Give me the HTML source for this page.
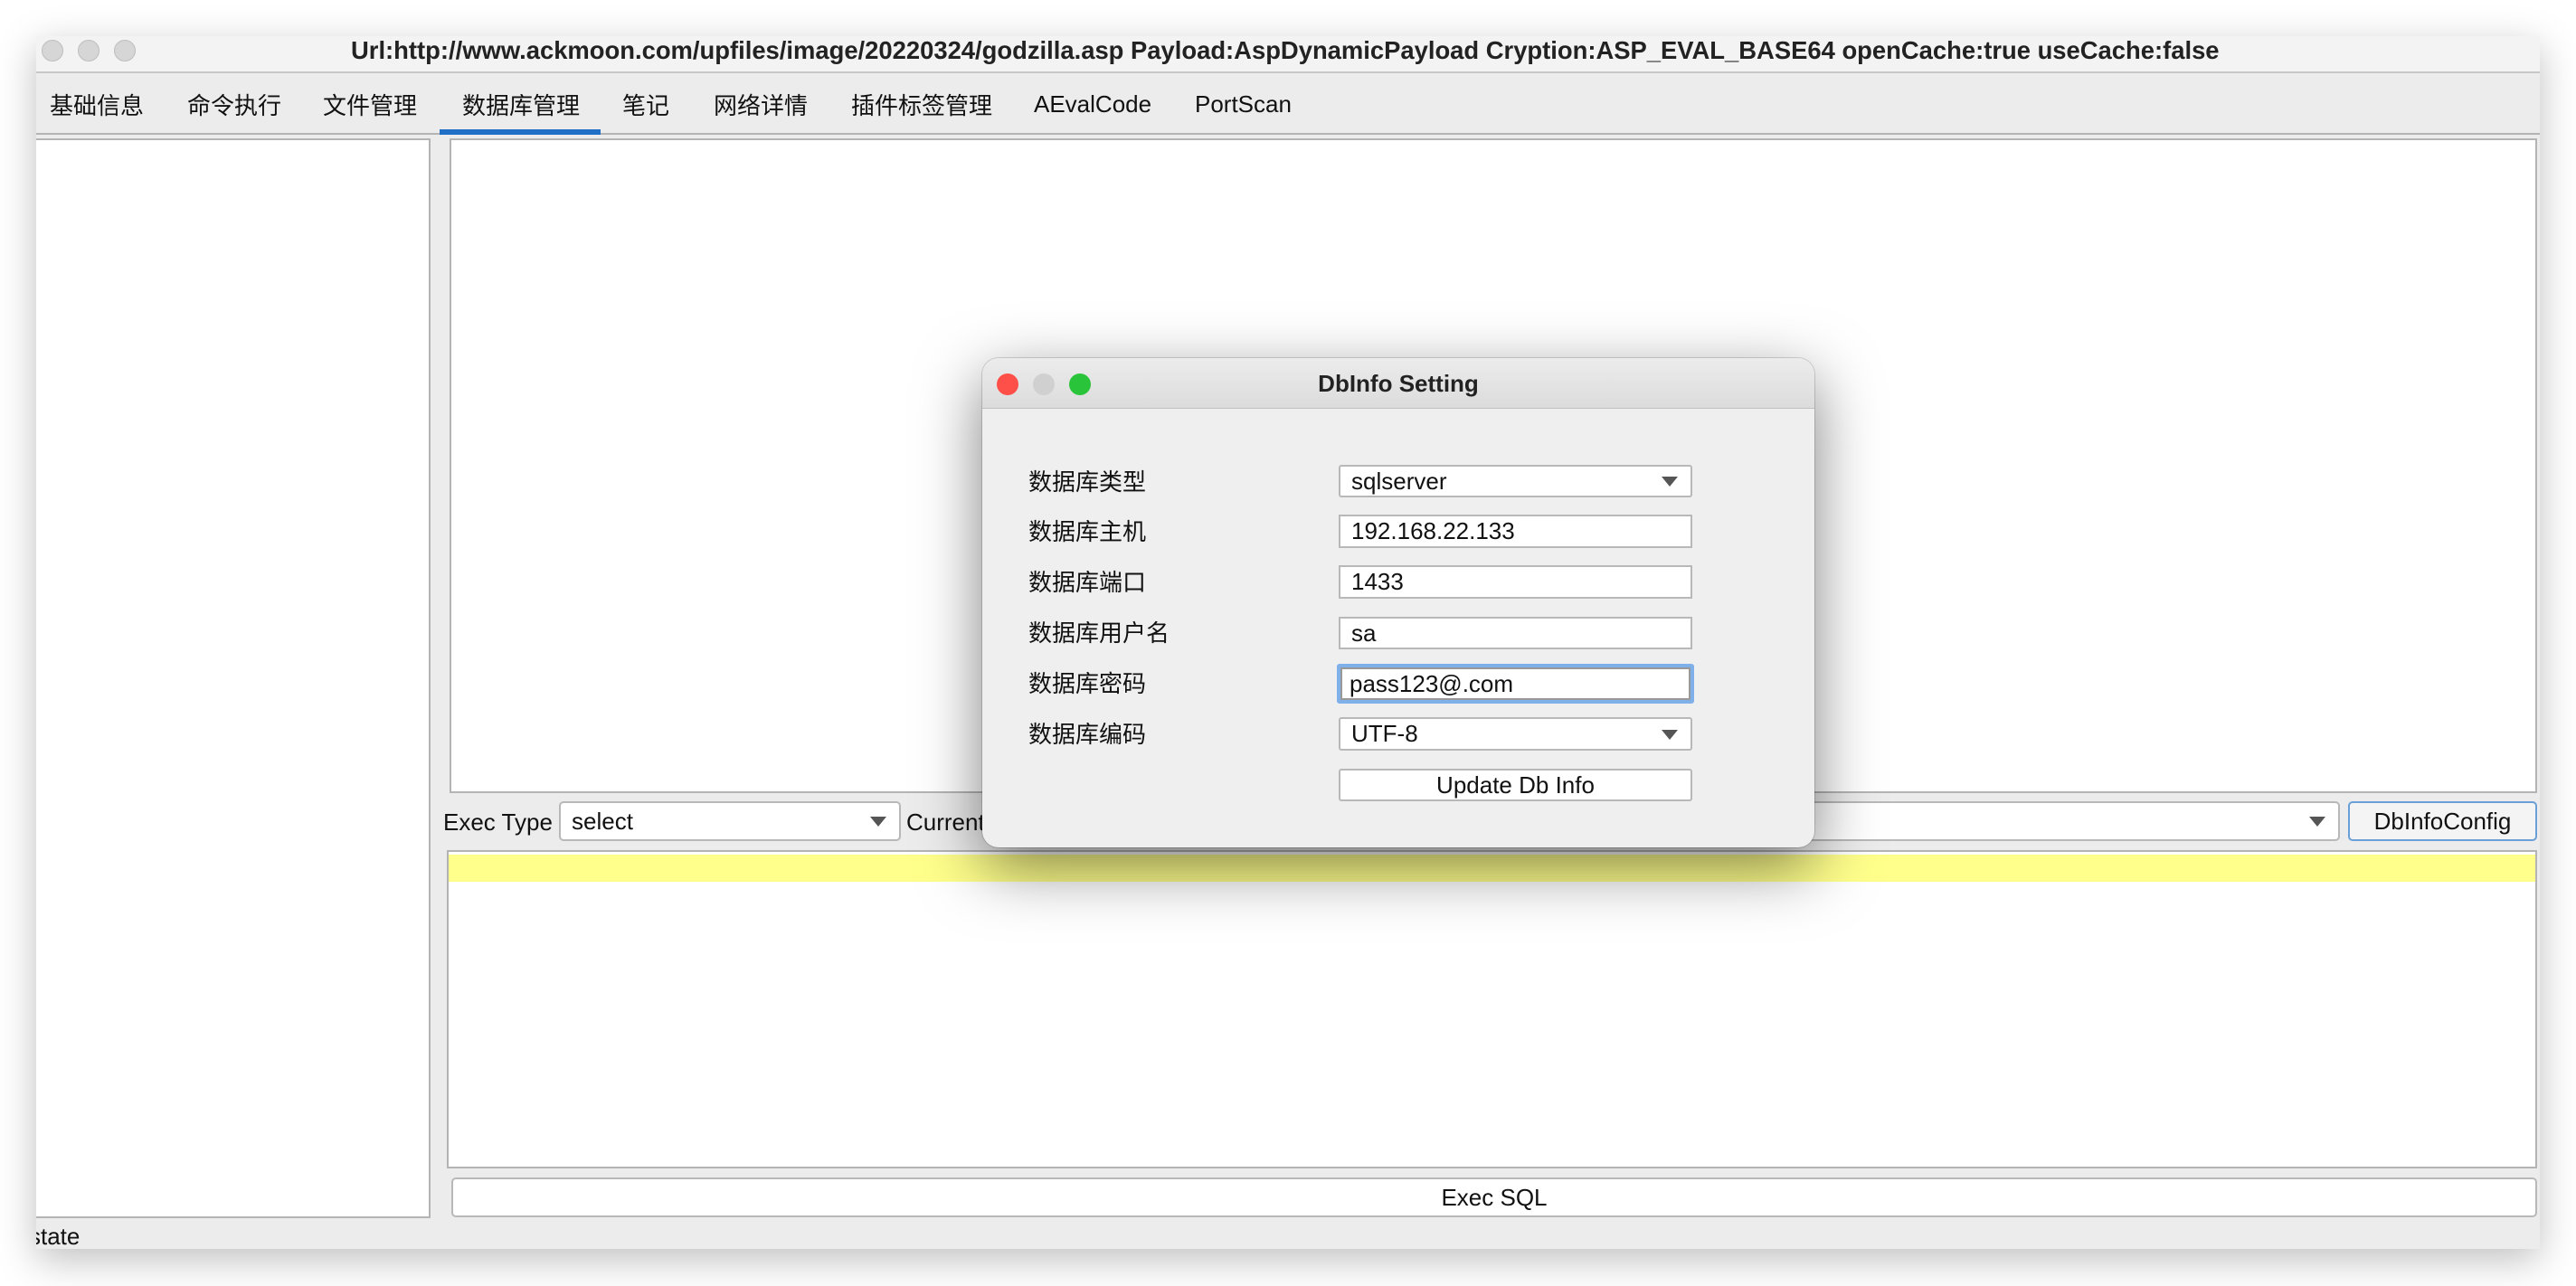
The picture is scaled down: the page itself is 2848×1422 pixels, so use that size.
<!DOCTYPE html>
<html><head><meta charset="utf-8"><style>
*{box-sizing:border-box;margin:0;padding:0}
body{width:2848px;height:1422px;background:#fff;position:relative;overflow:hidden;font-family:"Liberation Sans","Noto Sans CJK SC",sans-serif;color:#111}
.a{position:absolute}
#win{left:40px;top:40px;width:2768px;height:1341px;background:#ececec;box-shadow:0 12px 40px rgba(0,0,0,.25);overflow:hidden}
.tl{position:absolute;width:24px;height:24px;border-radius:50%}
.box{position:absolute;background:#fff;border:2px solid #b4b4b4}
.cb{position:absolute;background:#fff;border:2px solid #b8b8b8;border-radius:5px;font-size:26px;padding-left:12px;display:flex;align-items:center}
.arr{position:absolute;right:14px;top:50%;margin-top:-5px;width:0;height:0;border-left:9px solid transparent;border-right:9px solid transparent;border-top:11px solid #555}
.tab{position:absolute;font-size:26px}
</style></head><body>
<div id="win" class="a">
 <div class="a" style="left:0;top:0;width:2768px;height:41px;background:#f3f3f3;border-bottom:2px solid #c8c8c8"></div>
 <div class="tl" style="left:6px;top:4px;background:#d6d6d6;border:1px solid #bdbdbd"></div>
 <div class="tl" style="left:46px;top:4px;background:#d6d6d6;border:1px solid #bdbdbd"></div>
 <div class="tl" style="left:86px;top:4px;background:#d6d6d6;border:1px solid #bdbdbd"></div>
 <div class="a" style="left:348px;top:-5px;height:41px;line-height:41px;font-size:27.4px;font-weight:bold;color:#222;white-space:nowrap">Url:http://www.ackmoon.com/upfiles/image/20220324/godzilla.asp Payload:AspDynamicPayload Cryption:ASP_EVAL_BASE64 openCache:true useCache:false</div>
 <div class="tab" style="left:15px;top:57px">基础信息</div>
 <div class="tab" style="left:167px;top:57px">命令执行</div>
 <div class="tab" style="left:317px;top:57px">文件管理</div>
 <div class="tab" style="left:471px;top:57px">数据库管理</div>
 <div class="tab" style="left:648px;top:57px">笔记</div>
 <div class="tab" style="left:749px;top:57px">网络详情</div>
 <div class="tab" style="left:901px;top:57px">插件标签管理</div>
 <div class="tab" style="left:1103px;top:60px">AEvalCode</div>
 <div class="tab" style="left:1281px;top:60px">PortScan</div>
 <div class="a" style="left:0;top:107px;width:2768px;height:2px;background:#b4b4b4"></div>
 <div class="a" style="left:446px;top:103px;width:178px;height:6px;background:#1f6fc6"></div>
 <div class="box" style="left:-4px;top:113px;width:440px;height:1194px"></div>
 <div class="box" style="left:457px;top:113px;width:2308px;height:724px"></div>
 <div class="a" style="left:450px;top:856px;font-size:26px;line-height:1">Exec Type</div>
 <div class="cb" style="left:578px;top:846px;width:378px;height:44px">select<div class="arr"></div></div>
 <div class="a" style="left:962px;top:856px;font-size:26px;line-height:1">Current</div>
 <div class="cb" style="left:1054px;top:846px;width:1493px;height:44px"><div class="arr"></div></div>
 <div class="a" style="left:2556px;top:846px;width:209px;height:44px;background:#f4f4f4;border:2px solid #6a9fd8;border-radius:5px;font-size:26px;display:flex;align-items:center;justify-content:center">DbInfoConfig</div>
 <div class="box" style="left:454px;top:900px;width:2311px;height:352px"><div class="a" style="left:0;top:3px;width:100%;height:30px;background:#ffff8c"></div></div>
 <div class="a" style="left:459px;top:1262px;width:2306px;height:44px;background:#fff;border:2px solid #b8b8b8;border-radius:5px;font-size:26px;display:flex;align-items:center;justify-content:center">Exec SQL</div>
 <div class="a" style="left:-8px;top:1314px;font-size:26px;line-height:1">state</div>
</div>
<div class="a" style="left:1086px;top:396px;width:920px;height:541px;background:#efefef;border-radius:18px;box-shadow:0 22px 70px rgba(0,0,0,.5),0 0 0 1px rgba(0,0,0,.15);overflow:hidden">
 <div class="a" style="left:0;top:0;width:920px;height:56px;background:linear-gradient(#ececec,#dcdcdc);border-bottom:1px solid #c0c0c0"></div>
 <div class="tl" style="left:16px;top:17px;background:#fe4f48"></div>
 <div class="tl" style="left:56px;top:17px;background:#d0d0d0"></div>
 <div class="tl" style="left:96px;top:17px;background:#2ac43a"></div>
 <div class="a" style="left:0;top:0;width:920px;height:56px;line-height:56px;text-align:center;font-size:26px;font-weight:bold;color:#222">DbInfo Setting</div>
 <div class="a" style="left:51px;top:124px;font-size:26px;line-height:1">数据库类型</div>
 <div class="a" style="left:51px;top:179px;font-size:26px;line-height:1">数据库主机</div>
 <div class="a" style="left:51px;top:235px;font-size:26px;line-height:1">数据库端口</div>
 <div class="a" style="left:51px;top:291px;font-size:26px;line-height:1">数据库用户名</div>
 <div class="a" style="left:51px;top:347px;font-size:26px;line-height:1">数据库密码</div>
 <div class="a" style="left:51px;top:403px;font-size:26px;line-height:1">数据库编码</div>
 <div class="cb" style="left:394px;top:118px;width:391px;height:36px;border-radius:3px">sqlserver<div class="arr"></div></div>
 <div class="cb" style="left:394px;top:173px;width:391px;height:37px;border-radius:0">192.168.22.133</div>
 <div class="cb" style="left:394px;top:229px;width:391px;height:37px;border-radius:0">1433</div>
 <div class="cb" style="left:394px;top:286px;width:391px;height:36px;border-radius:0">sa</div>
 <div class="cb" style="left:392px;top:338px;width:395px;height:44px;border:4px solid #7fb0ea;border-radius:3px;padding-left:10px"><span style="position:absolute;left:0;top:0;right:0;bottom:0;border:2px solid #999"></span>pass123@.com</div>
 <div class="cb" style="left:394px;top:397px;width:391px;height:37px;border-radius:3px">UTF-8<div class="arr"></div></div>
 <div class="cb" style="left:394px;top:454px;width:391px;height:36px;border-radius:3px;justify-content:center;padding:0">Update Db Info</div>
</div>
</body></html>
